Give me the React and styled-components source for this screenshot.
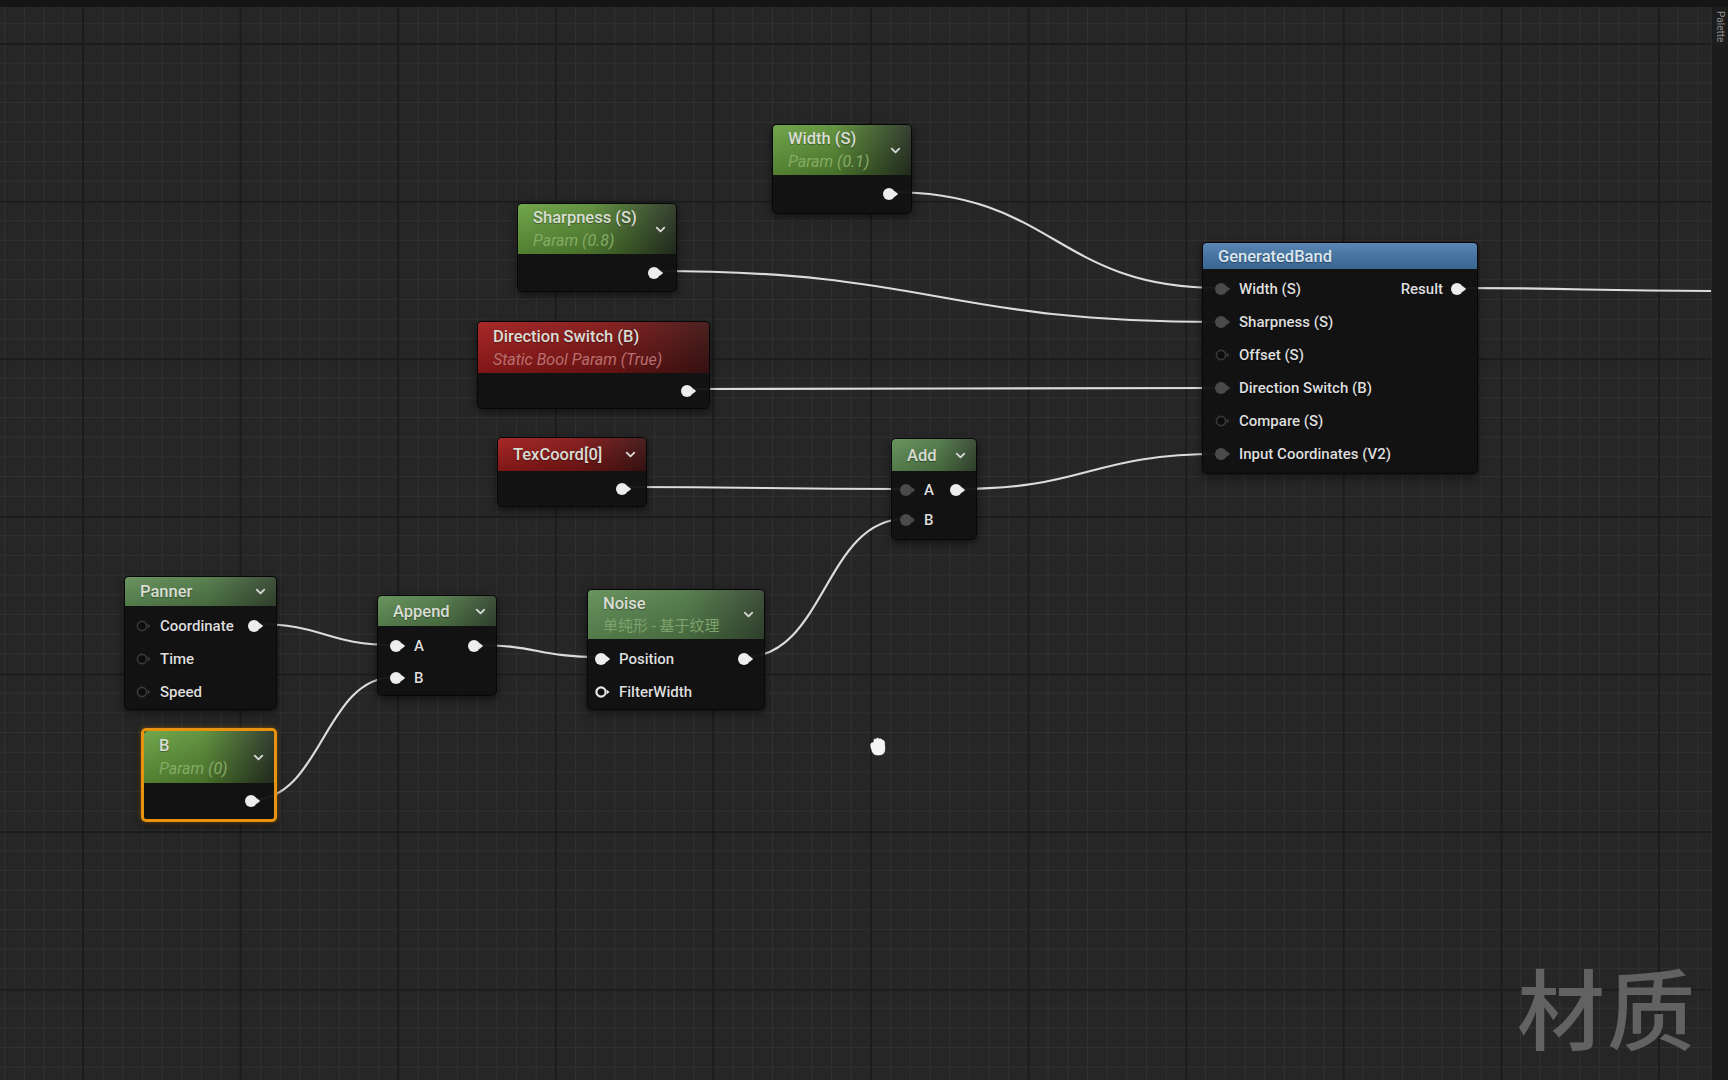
import styled, { createGlobalStyle } from "styled-components";
import { ChevronDown } from "lucide-react";

const TOP = 7; // height of the top bar, canvas coordinates start below it

const GlobalStyle = createGlobalStyle`
  html, body {
    margin: 0;
    padding: 0;
    background: #262626;
  }
  body {
    font-family: Roboto, "Noto Sans", "Noto Sans CJK SC", sans-serif;
    -webkit-font-smoothing: antialiased;
  }
`;

const tones = {
  param: `linear-gradient(to bottom, rgba(255,255,255,0.07), rgba(0,0,0,0.2)),
    linear-gradient(to right, #67a03e 0%, #598c34 45%, #283323 100%)`,
  muted: `linear-gradient(to bottom, rgba(255,255,255,0.05), rgba(0,0,0,0.14)),
    linear-gradient(to right, #618e56 0%, #517a48 55%, #364832 100%)`,
  red: `linear-gradient(to bottom, rgba(255,255,255,0.05), rgba(0,0,0,0.22)),
    linear-gradient(to right, #a41d1d 0%, #821717 55%, #421515 100%)`,
  blue: `linear-gradient(to bottom, #5b87b3 0%, #4572a0 55%, #3a6590 100%)`,
};

const subColors = {
  param: "#84ab64",
  muted: "#7fa36c",
  red: "#b86e6e",
  blue: "#9bb8d6",
};

// ---- page frame ----
const Page = styled.div`
  width: 1728px;
  height: 1080px;
  display: flex;
  flex-direction: column;
  overflow: hidden;
`;

const TopBar = styled.div`
  height: ${TOP}px;
  background: #151515;
  flex-shrink: 0;
`;

const Main = styled.div`
  flex: 1;
  display: flex;
  min-height: 0;
`;

const Canvas = styled.div`
  flex: 1;
  position: relative;
  overflow: hidden;
  background-color: #262626;
  background-image: linear-gradient(#1b1b1b 2px, transparent 2px),
    linear-gradient(90deg, #1b1b1b 2px, transparent 2px),
    linear-gradient(#313131 1px, transparent 1px),
    linear-gradient(90deg, #313131 1px, transparent 1px);
  background-size: 157.6px 157.6px, 157.6px 157.6px, 19.7px 19.7px,
    19.7px 19.7px;
  background-position: 0 ${43 - TOP}px, 82px 0, 0 ${(43 - TOP) % 19.7}px,
    4.2px 0;
`;

const SideTab = styled.div`
  width: 16px;
  flex-shrink: 0;
  background: #1c1c1c;
  border-left: 1px solid #2b2b2b;
  overflow: hidden;
`;

const TabLabel = styled.div`
  writing-mode: vertical-rl;
  font-size: 10px;
  line-height: 12px;
  color: #8a8a8a;
  padding: 4px 0 0 2px;
  white-space: nowrap;
`;

const Wires = styled.svg`
  position: absolute;
  left: 0;
  top: 0;
  width: 100%;
  height: 100%;
  pointer-events: none;
`;

const Watermark = styled.div`
  position: absolute;
  right: 14px;
  bottom: 26px;
  font-family: "Noto Sans CJK SC", "Noto Sans", sans-serif;
  font-size: 88px;
  line-height: 1.1;
  font-weight: 500;
  color: #626262;
  letter-spacing: 2px;
`;

const Cursor = styled.svg`
  position: absolute;
  left: 867px;
  top: ${736 - TOP}px;
`;

// ---- nodes ----
const NodeBox = styled.div`
  position: absolute;
  left: ${(p) => p.$x}px;
  top: ${(p) => p.$y - TOP}px;
  width: ${(p) => p.$w}px;
  box-sizing: border-box;
  background: rgba(18, 18, 18, 0.96);
  border-radius: 5px;
  border: ${(p) =>
    p.$selected ? "3px solid #e8930f" : "1px solid rgba(0,0,0,0.55)"};
  box-shadow: ${(p) =>
    p.$selected
      ? "0 0 5px rgba(232,147,15,0.45), 0 3px 8px rgba(0,0,0,0.6)"
      : "0 3px 8px rgba(0,0,0,0.55)"};
`;

const Header = styled.div`
  height: ${(p) => p.$h}px;
  box-sizing: border-box;
  display: flex;
  align-items: center;
  justify-content: space-between;
  padding: 0 8px 0 ${(p) => p.$pl ?? 15}px;
  border-radius: 4px 4px 0 0;
  background: ${(p) => tones[p.$tone]};
  color: #dcdcd8;
`;

const TitleBlock = styled.div`
  display: flex;
  flex-direction: column;
  gap: 4px;
`;

const Title = styled.div`
  font-size: 16.5px;
  font-weight: 500;
  line-height: 19px;
  color: ${(p) => (p.$tone === "blue" ? "#dde6ee" : "#d9ddd4")};
  white-space: nowrap;
  text-shadow: 0 1px 1px rgba(0, 0, 0, 0.35);
`;

const Sub = styled.div`
  font-size: ${(p) => (p.$upright ? 15 : 16)}px;
  line-height: 19px;
  font-style: ${(p) => (p.$upright ? "normal" : "italic")};
  color: ${(p) => subColors[p.$tone]};
  white-space: nowrap;
`;

const Body = styled.div`
  padding: ${(p) => p.$pt ?? 3}px 0 ${(p) => p.$pb ?? 3}px;
`;

const Row = styled.div`
  display: flex;
  align-items: center;
  justify-content: ${(p) => (p.$end ? "flex-end" : "space-between")};
  height: ${(p) => p.$h ?? 33}px;
  padding: 0 ${(p) => p.$pr ?? 11}px 0 ${(p) => p.$pl ?? 11}px;
`;

const PinGroup = styled.div`
  display: flex;
  align-items: center;
  gap: 7px;
`;

const Label = styled.span`
  font-size: 15px;
  font-weight: 500;
  color: #dedede;
  white-space: nowrap;
  text-shadow: 0 1px 1px rgba(0, 0, 0, 0.5);
`;

const PinSvg = styled.svg`
  display: block;
  flex-shrink: 0;
`;

function Pin({ kind = "on" }) {
  if (kind === "hollow") {
    return (
      <PinSvg width="18" height="14" viewBox="0 0 18 14">
        <circle cx="7" cy="7" r="4.6" fill="#0d0d0d" stroke="#3a3a3a" strokeWidth="1.6" />
        <path d="M12.6 4.6 L15.6 7 L12.6 9.4 Z" fill="#3a3a3a" />
      </PinSvg>
    );
  }
  if (kind === "ring") {
    return (
      <PinSvg width="18" height="14" viewBox="0 0 18 14">
        <circle cx="7" cy="7" r="4.6" fill="none" stroke="#e6e6e6" strokeWidth="2.2" />
        <path d="M12.6 4.6 L15.6 7 L12.6 9.4 Z" fill="#e6e6e6" />
      </PinSvg>
    );
  }
  const c = kind === "grey" ? "#4a4a4a" : "#ededed";
  return (
    <PinSvg width="18" height="14" viewBox="0 0 18 14">
      <circle cx="7" cy="7" r="6" fill={c} />
      <path d="M12.2 3.8 L16.2 7 L12.2 10.2 Z" fill={c} />
    </PinSvg>
  );
}

function GraphNode({
  x, y, w, tone, title, sub, upright, headH, chevron = true, selected,
  headPl, bodyPt, bodyPb, children,
}) {
  return (
    <NodeBox $x={x} $y={y} $w={w} $selected={selected}>
      <Header $h={headH} $tone={tone} $pl={headPl}>
        <TitleBlock>
          <Title $tone={tone}>{title}</Title>
          {sub && (
            <Sub $tone={tone} $upright={upright}>
              {sub}
            </Sub>
          )}
        </TitleBlock>
        {chevron && <ChevronDown size={15} strokeWidth={3} color="#d6d6d6" />}
      </Header>
      <Body $pt={bodyPt} $pb={bodyPb}>{children}</Body>
    </NodeBox>
  );
}

function InRow({ label, kind = "on", out, outLabel, h, pl, pr }) {
  return (
    <Row $h={h} $pl={pl} $pr={pr}>
      <PinGroup>
        <Pin kind={kind} />
        <Label>{label}</Label>
      </PinGroup>
      {out && (
        <PinGroup>
          {outLabel && <Label>{outLabel}</Label>}
          <Pin />
        </PinGroup>
      )}
    </Row>
  );
}

function OutRow({ pr }) {
  return (
    <Row $end $pr={pr}>
      <Pin />
    </Row>
  );
}

// wires, in page coordinates [x1, y1, x2, y2]
const wires = [
  [890, 192, 1220, 288],
  [655, 271, 1220, 322],
  [688, 389, 1220, 388],
  [623, 487, 905, 489],
  [957, 489, 1220, 454],
  [745, 657, 905, 519],
  [255, 624, 395, 645],
  [251, 800, 395, 677],
  [475, 645, 600, 657],
  [1458, 288, 1712, 291],
];

function wirePath([x1, y1, x2, y2]) {
  const t = Math.max(Math.abs(x2 - x1) * 0.5, 30);
  const a = y1 - TOP;
  const b = y2 - TOP;
  return `M ${x1} ${a} C ${x1 + t} ${a}, ${x2 - t} ${b}, ${x2} ${b}`;
}

export default function App() {
  return (
    <>
      <GlobalStyle />
      <Page>
        <TopBar />
        <Main>
          <Canvas>
            <Wires>
              {wires.map((w, i) => (
                <path
                  key={i}
                  d={wirePath(w)}
                  fill="none"
                  stroke="#dcdcdc"
                  strokeWidth="2.2"
                  strokeLinecap="round"
                />
              ))}
            </Wires>

            <GraphNode x={772} y={124} w={140} tone="param" title="Width (S)" sub="Param (0.1)" headH={50} bodyPt={2} bodyPb={3}>
              <OutRow />
            </GraphNode>

            <GraphNode x={517} y={203} w={160} tone="param" title="Sharpness (S)" sub="Param (0.8)" headH={50} bodyPt={2} bodyPb={2}>
              <OutRow />
            </GraphNode>

            <GraphNode x={477} y={321} w={233} tone="red" title="Direction Switch (B)" sub="Static Bool Param (True)" headH={51} chevron={false} bodyPt={1} bodyPb={1}>
              <OutRow />
            </GraphNode>

            <GraphNode x={497} y={437} w={150} tone="red" title="TexCoord[0]" headH={33} bodyPt={1} bodyPb={1}>
              <OutRow pr={13} />
            </GraphNode>

            <GraphNode x={891} y={438} w={86} tone="muted" title="Add" headH={32} bodyPt={4} bodyPb={4}>
              <InRow label="A" kind="grey" out h={30} pl={7} pr={9} />
              <InRow label="B" kind="grey" h={30} pl={7} pr={9} />
            </GraphNode>

            <GraphNode x={1202} y={242} w={276} tone="blue" title="GeneratedBand" headH={26} chevron={false} bodyPt={3} bodyPb={3}>
              <InRow label="Width (S)" kind="grey" out outLabel="Result" pl={11} pr={9} />
              <InRow label="Sharpness (S)" kind="grey" pl={11} />
              <InRow label="Offset (S)" kind="hollow" pl={11} />
              <InRow label="Direction Switch (B)" kind="grey" pl={11} />
              <InRow label="Compare (S)" kind="hollow" pl={11} />
              <InRow label="Input Coordinates (V2)" kind="grey" pl={11} />
            </GraphNode>

            <GraphNode x={124} y={576} w={153} tone="muted" title="Panner" headH={29} bodyPt={3} bodyPb={1}>
              <InRow label="Coordinate" kind="hollow" out pl={10} pr={11} />
              <InRow label="Time" kind="hollow" pl={10} />
              <InRow label="Speed" kind="hollow" pl={10} />
            </GraphNode>

            <GraphNode x={141} y={728} w={136} tone="param" title="B" sub="Param (0)" headH={52} selected bodyPt={1} bodyPb={2}>
              <OutRow pr={12} />
            </GraphNode>

            <GraphNode x={377} y={595} w={120} tone="muted" title="Append" headH={30} bodyPt={4} bodyPb={1}>
              <InRow label="A" out h={32} pl={11} pr={11} />
              <InRow label="B" h={32} pl={11} />
            </GraphNode>

            <GraphNode x={587} y={589} w={178} tone="muted" title="Noise" sub="单纯形 - 基于纹理" upright headH={49} bodyPt={3} bodyPb={1}>
              <InRow label="Position" out pl={6} pr={9} />
              <InRow label="FilterWidth" kind="ring" pl={6} />
            </GraphNode>

            <Cursor width="22" height="22" viewBox="0 0 16 16">
              <path
                d="M2.2 7.4 Q2 4.4 4.4 4.4 L4.6 3 Q4.9 1.2 6.6 1.7 Q7.6 0.6 8.9 1.6 Q10.4 0.9 11.1 2.5 Q13 2.3 13.2 4.3 L13.5 9.2 Q13.5 14.2 8.6 14.4 Q4.6 14.6 3.3 11.3 Z"
                fill="#f4f4f4"
                stroke="#1a1a1a"
                strokeWidth="0.5"
              />
            </Cursor>

            <Watermark>材质</Watermark>
          </Canvas>
          <SideTab>
            <TabLabel>Palette</TabLabel>
          </SideTab>
        </Main>
      </Page>
    </>
  );
}
